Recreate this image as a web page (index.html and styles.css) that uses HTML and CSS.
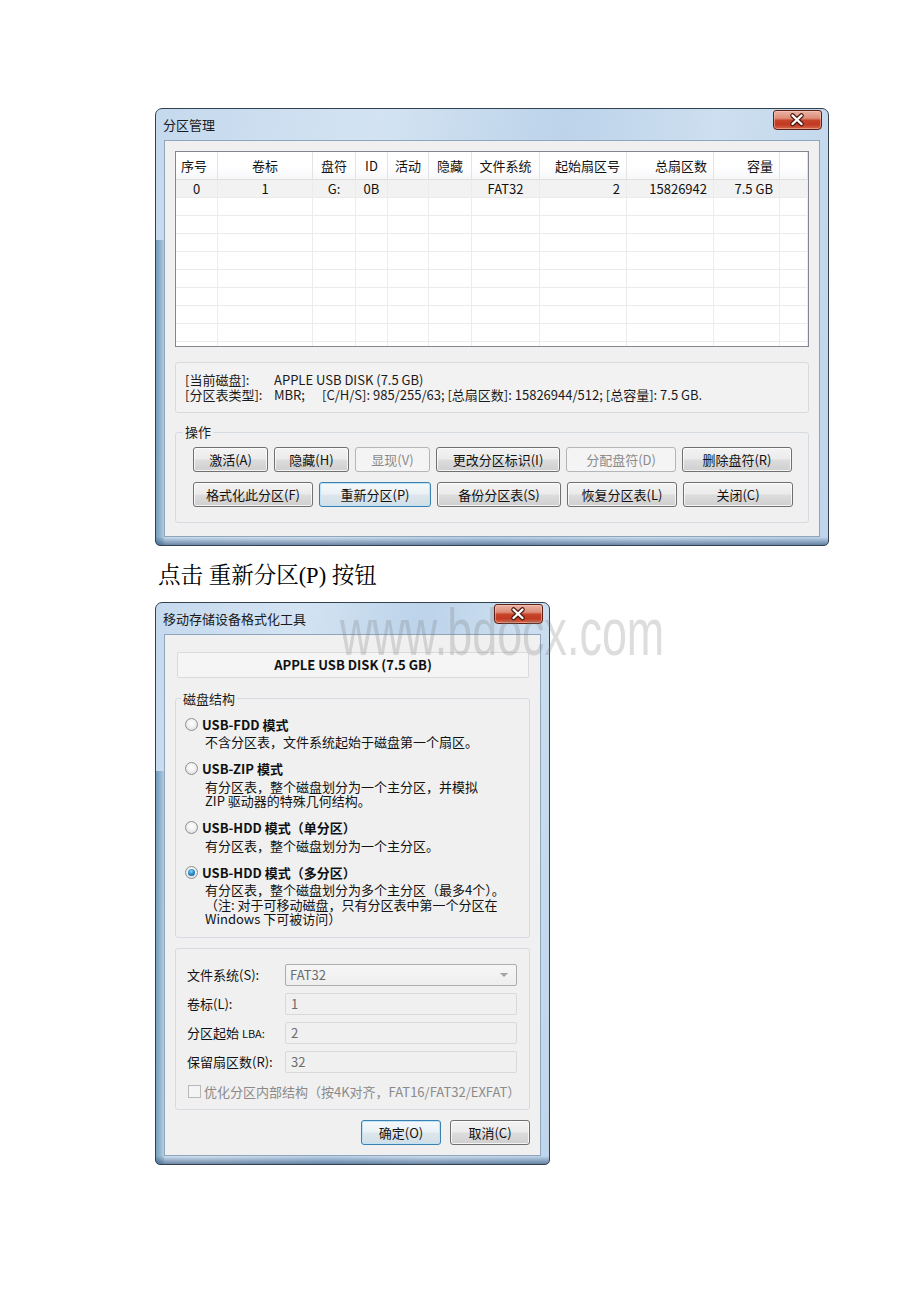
FILE: index.html
```html
<!DOCTYPE html>
<html lang="zh-CN">
<head>
<meta charset="utf-8">
<title>分区管理</title>
<link rel="stylesheet" href="styles.css">
</head>
<body>
<div class="page">

  <div class="win win-part">
    <div class="titlebar">
      <span class="title">分区管理</span>
      <span class="close">
        <svg width="48" height="20" viewBox="0 0 48 20">
          <path d="M19.5 5.5 L28.5 14 M28.5 5.5 L19.5 14" stroke="#4a1810" stroke-width="4.6" stroke-linecap="round"/>
          <path d="M19.5 5.5 L28.5 14 M28.5 5.5 L19.5 14" stroke="#ffffff" stroke-width="2.4" stroke-linecap="round"/>
        </svg>
      </span>
    </div>
    <div class="client client-part">
      <div class="listview">
        <div class="lv-row lv-head">
          <div class="c l">序号</div>
          <div class="c m">卷标</div>
          <div class="c m">盘符</div>
          <div class="c m">ID</div>
          <div class="c m">活动</div>
          <div class="c m">隐藏</div>
          <div class="c m">文件系统</div>
          <div class="c r">起始扇区号</div>
          <div class="c r">总扇区数</div>
          <div class="c r">容量</div>
          <div class="c"></div>
        </div>
        <div class="lv-row lv-sel">
          <div class="c m">0</div>
          <div class="c m">1</div>
          <div class="c m">G:</div>
          <div class="c m">0B</div>
          <div class="c"></div>
          <div class="c"></div>
          <div class="c m">FAT32</div>
          <div class="c r">2</div>
          <div class="c r">15826942</div>
          <div class="c r">7.5 GB</div>
          <div class="c"></div>
        </div>
        <div class="lv-row"><div class="c"></div><div class="c"></div><div class="c"></div><div class="c"></div><div class="c"></div><div class="c"></div><div class="c"></div><div class="c"></div><div class="c"></div><div class="c"></div><div class="c"></div></div>
        <div class="lv-row"><div class="c"></div><div class="c"></div><div class="c"></div><div class="c"></div><div class="c"></div><div class="c"></div><div class="c"></div><div class="c"></div><div class="c"></div><div class="c"></div><div class="c"></div></div>
        <div class="lv-row"><div class="c"></div><div class="c"></div><div class="c"></div><div class="c"></div><div class="c"></div><div class="c"></div><div class="c"></div><div class="c"></div><div class="c"></div><div class="c"></div><div class="c"></div></div>
        <div class="lv-row"><div class="c"></div><div class="c"></div><div class="c"></div><div class="c"></div><div class="c"></div><div class="c"></div><div class="c"></div><div class="c"></div><div class="c"></div><div class="c"></div><div class="c"></div></div>
        <div class="lv-row"><div class="c"></div><div class="c"></div><div class="c"></div><div class="c"></div><div class="c"></div><div class="c"></div><div class="c"></div><div class="c"></div><div class="c"></div><div class="c"></div><div class="c"></div></div>
        <div class="lv-row"><div class="c"></div><div class="c"></div><div class="c"></div><div class="c"></div><div class="c"></div><div class="c"></div><div class="c"></div><div class="c"></div><div class="c"></div><div class="c"></div><div class="c"></div></div>
        <div class="lv-row"><div class="c"></div><div class="c"></div><div class="c"></div><div class="c"></div><div class="c"></div><div class="c"></div><div class="c"></div><div class="c"></div><div class="c"></div><div class="c"></div><div class="c"></div></div>
        <div class="lv-row"><div class="c"></div><div class="c"></div><div class="c"></div><div class="c"></div><div class="c"></div><div class="c"></div><div class="c"></div><div class="c"></div><div class="c"></div><div class="c"></div><div class="c"></div></div>
        <div class="lv-row"><div class="c"></div><div class="c"></div><div class="c"></div><div class="c"></div><div class="c"></div><div class="c"></div><div class="c"></div><div class="c"></div><div class="c"></div><div class="c"></div><div class="c"></div></div>
      </div>

      <div class="info">
        <div class="info-line"><span class="k">[当前磁盘]:</span><span>APPLE USB DISK (7.5 GB)</span></div>
        <div class="info-line"><span class="k">[分区表类型]:</span><span class="mbr">MBR;</span><span>[C/H/S]: 985/255/63; [总扇区数]: 15826944/512; [总容量]: 7.5 GB.</span></div>
      </div>

      <fieldset class="group ops">
        <legend>操作</legend>
        <div class="ops-body">
          <div class="btn-row">
            <button class="btn w75">激活(A)</button>
            <button class="btn w75">隐藏(H)</button>
            <button class="btn w75" disabled>显现(V)</button>
            <button class="btn w124">更改分区标识(I)</button>
            <button class="btn w110" disabled>分配盘符(D)</button>
            <button class="btn w110">删除盘符(R)</button>
          </div>
          <div class="btn-row">
            <button class="btn w120">格式化此分区(F)</button>
            <button class="btn w112 def">重新分区(P)</button>
            <button class="btn w124">备份分区表(S)</button>
            <button class="btn w110">恢复分区表(L)</button>
            <button class="btn w110">关闭(C)</button>
          </div>
        </div>
      </fieldset>
    </div>
  </div>

  <p class="caption">点击 重新分区(P) 按钮</p>

  <div class="win win-fmt">
    <div class="titlebar">
      <span class="title">移动存储设备格式化工具</span>
      <span class="close">
        <svg width="48" height="20" viewBox="0 0 48 20">
          <path d="M19.5 5.5 L28.5 14 M28.5 5.5 L19.5 14" stroke="#4a1810" stroke-width="4.6" stroke-linecap="round"/>
          <path d="M19.5 5.5 L28.5 14 M28.5 5.5 L19.5 14" stroke="#ffffff" stroke-width="2.4" stroke-linecap="round"/>
        </svg>
      </span>
    </div>
    <div class="client client-fmt">
      <div class="disk-name">APPLE USB DISK (7.5 GB)</div>

      <fieldset class="group struct">
        <legend>磁盘结构</legend>
        <div class="struct-body">
          <div class="opt">
            <div class="opt-title"><span class="radio"></span><b>USB-FDD 模式</b></div>
            <div class="opt-desc">不含分区表，文件系统起始于磁盘第一个扇区。</div>
          </div>
          <div class="opt">
            <div class="opt-title"><span class="radio"></span><b>USB-ZIP 模式</b></div>
            <div class="opt-desc"><div>有分区表，整个磁盘划分为一个主分区，并模拟</div><div>ZIP 驱动器的特殊几何结构。</div></div>
          </div>
          <div class="opt">
            <div class="opt-title"><span class="radio"></span><b>USB-HDD 模式（单分区）</b></div>
            <div class="opt-desc">有分区表，整个磁盘划分为一个主分区。</div>
          </div>
          <div class="opt">
            <div class="opt-title"><span class="radio checked"></span><b>USB-HDD 模式（多分区）</b></div>
            <div class="opt-desc"><div>有分区表，整个磁盘划分为多个主分区（最多4个）。</div><div>（注: 对于可移动磁盘，只有分区表中第一个分区在</div><div>Windows 下可被访问）</div></div>
          </div>
        </div>
      </fieldset>

      <fieldset class="group params">
        <div class="params-body">
          <div class="field">
            <span class="lbl">文件系统(S):</span>
            <span class="combo"><span>FAT32</span><span class="arrow"></span></span>
          </div>
          <div class="field">
            <span class="lbl">卷标(L):</span>
            <span class="input">1</span>
          </div>
          <div class="field">
            <span class="lbl">分区起始 <small>LBA:</small></span>
            <span class="input">2</span>
          </div>
          <div class="field">
            <span class="lbl">保留扇区数(R):</span>
            <span class="input">32</span>
          </div>
          <div class="check-row">
            <span class="checkbox"></span>
            <span class="check-text">优化分区内部结构（按4K对齐，FAT16/FAT32/EXFAT）</span>
          </div>
        </div>
      </fieldset>

      <div class="dlg-buttons">
        <button class="btn w80 def">确定(O)</button>
        <button class="btn w80">取消(C)</button>
      </div>
    </div>
  </div>

  <div class="watermark">www.bdocx.com</div>
</div>
</body>
</html>
```

FILE: styles.css
```css
* { box-sizing: border-box; }

html, body {
  margin: 0;
  padding: 0;
  background: #ffffff;
}

body {
  font-family: "Noto Sans CJK SC", "Liberation Sans", sans-serif;
  font-size: 13px;
  color: #000;
}

.page {
  position: relative;
  padding: 108px 0 0 155px;
  height: 1302px;
  overflow: hidden;
}

/* ---------- window frame ---------- */
.win {
  border: 1px solid #34414f;
  border-radius: 7px 7px 5px 5px;
  padding: 0 8px 8px 8px;
  background:
    linear-gradient(0deg, rgba(28, 62, 104, 0.55) 0px, rgba(28, 62, 104, 0.0) 8px),
    linear-gradient(90deg, rgba(30, 96, 138, 0.5) 0px, rgba(30, 96, 138, 0.2) 7px, rgba(30, 96, 138, 0) 9px) 0 100% / 100% 70% no-repeat,
    linear-gradient(100deg, #c5d9ee 0%, #d3e3f2 30%, #bcd3ea 55%, #cddff0 75%, #bfd5eb 100%);
}

.win-part { width: 674px; }

.win-fmt {
  width: 395px;
  margin-top: 13px;
}

.titlebar {
  height: 31px;
  display: flex;
  justify-content: space-between;
  align-items: flex-start;
}

.title {
  margin-left: -1px;
  padding-top: 8px;
  line-height: 16px;
  font-size: 13px;
  color: #1a1a1a;
}

.close {
  display: block;
  width: 49px;
  height: 20px;
  margin-top: 1px;
  margin-right: -2px;
  border: 1px solid #5a1f15;
  border-radius: 3px 3px 4px 4px;
  background: linear-gradient(180deg, #eab2a4 0%, #de8d78 40%, #c7442a 52%, #c23a22 75%, #d6674c 100%);
  box-shadow: inset 0 0 0 1px rgba(255, 215, 200, 0.45);
  overflow: hidden;
}

.close svg {
  display: block;
  margin: -1px 0 0 -1px;
}

.client {
  background: #f0f0f0;
  border: 1px solid #8ea5bc;
}

.client-part { padding: 10px 10px 13px 10px; }

.client-fmt { padding: 17px 10px 10px 10px; }

/* ---------- list view ---------- */
.listview {
  height: 196px;
  border: 1px solid #828790;
  background: #ffffff;
  overflow: hidden;
}

.lv-row {
  display: grid;
  grid-template-columns: 42px 95px 43px 32px 41px 43px 68px 87px 87px 66px 1fr;
  height: 18px;
  border-bottom: 1px solid #ebebeb;
}

.lv-head {
  height: 28px;
  border-bottom: 1px solid #dedede;
  background: linear-gradient(180deg, #ffffff 0%, #ffffff 55%, #f6f7f9 100%);
}

.lv-sel { background: #f2f2f2; }

.c {
  border-right: 1px solid #ececec;
  padding: 0 5px;
  white-space: nowrap;
  overflow: hidden;
  line-height: 17px;
  color: #111;
}

.lv-head .c {
  line-height: 27px;
  border-right-color: #e4e4e4;
}

.c.m { text-align: center; padding: 0 2px; }
.c.r { text-align: right; padding: 0 6px 0 2px; }
.c.l { text-align: left; }

/* ---------- info ---------- */
.info {
  margin-top: 15px;
  height: 51px;
  border: 1px solid #dadada;
  border-radius: 3px;
  background: #f2f2f2;
  padding: 9px 8px 0 9px;
}

.info-line {
  line-height: 15px;
  white-space: nowrap;
  color: #1a1a1a;
}

.info-line .k {
  display: inline-block;
  width: 89px;
}

.info-line .mbr {
  display: inline-block;
  width: 48px;
}

/* ---------- group boxes ---------- */
.group {
  margin: 0;
  padding: 0;
  min-width: 0;
  border: 1px solid #d5dbe0;
  border-radius: 3px;
}

.group legend {
  margin-left: 7px;
  padding: 0 2px;
  line-height: 14px;
  font-size: 13px;
  color: #1a1a1a;
}

.ops { margin-top: 12px; }

.ops-body {
  padding: 8px 0 15px 17px;
  display: flex;
  flex-direction: column;
  gap: 10px;
}

.btn-row {
  display: flex;
  gap: 6px;
}

/* ---------- buttons ---------- */
.btn {
  height: 25px;
  padding: 0;
  margin: 0;
  font-family: inherit;
  font-size: 13px;
  line-height: 23px;
  color: #111;
  text-align: center;
  border: 1px solid #707070;
  border-radius: 3px;
  background: linear-gradient(180deg, #f3f3f3 0%, #ebebeb 48%, #dddddd 52%, #cfcfcf 100%);
  box-shadow: inset 0 0 0 1px rgba(255, 255, 255, 0.75);
}

.btn[disabled] {
  color: #8b8b8b;
  border-color: #b3b6b8;
  background: #f4f4f4;
  box-shadow: none;
}

.btn.def {
  border-color: #3c7fb1;
  background: linear-gradient(180deg, #f4f8fa 0%, #eaf1f5 48%, #dce6ec 52%, #d2dee6 100%);
  box-shadow: inset 0 0 0 1px #bfe4f7;
}

.w75 { width: 75px; }
.w80 { width: 80px; }
.w110 { width: 110px; }
.w112 { width: 112px; }
.w120 { width: 120px; }
.w124 { width: 124px; }

/* ---------- caption ---------- */
.caption {
  margin: 17px 0 0 3px;
  font-family: "Liberation Serif", "Noto Serif CJK SC", "Noto Sans CJK SC", serif;
  font-size: 22.5px;
  line-height: 26px;
  color: #000;
}

/* ---------- format dialog ---------- */
.disk-name {
  height: 26px;
  margin: 0 1px 0 2px;
  border: 1px solid #dadada;
  border-radius: 2px;
  background: #f5f5f5;
  text-align: center;
  font-weight: bold;
  line-height: 23px;
  color: #111;
}

.struct { margin-top: 13px; }

.struct legend { margin-left: 5px; line-height: 15px; }

.struct-body {
  padding: 9px 0 10px 0;
  display: flex;
  flex-direction: column;
  gap: 10px;
}

.opt-title {
  display: flex;
  align-items: center;
  height: 18px;
  white-space: nowrap;
}

.opt-title b { color: #111; }

.radio {
  flex: none;
  position: relative;
  width: 13px;
  height: 13px;
  margin: 0 4px 0 9px;
  border: 1px solid #8e8f8f;
  border-radius: 50%;
  background: radial-gradient(circle at 50% 40%, #ffffff 0%, #f1f1f1 45%, #d3d3d3 100%);
}

.radio.checked::after {
  content: "";
  position: absolute;
  left: 2px;
  top: 2px;
  width: 7px;
  height: 7px;
  border-radius: 50%;
  background: radial-gradient(circle at 45% 35%, #8fd8f7 0%, #2b8ccc 45%, #10507f 100%);
}

.opt-desc {
  margin: 2px 0 0 29px;
  line-height: 14.5px;
  color: #111;
  white-space: nowrap;
}

.params { margin-top: 10px; }

.params-body {
  padding: 15px 12px 9px 11px;
  display: flex;
  flex-direction: column;
  gap: 7px;
}

.field {
  display: flex;
  align-items: center;
  height: 22px;
}

.lbl {
  width: 98px;
  flex: none;
  color: #111;
  white-space: nowrap;
}

.lbl small { font-size: 11px; }

.combo,
.input {
  width: 233px;
  height: 22px;
  padding: 0 0 0 4px;
  line-height: 20px;
  color: #6d6d6d;
  white-space: nowrap;
}

.combo {
  display: flex;
  align-items: center;
  justify-content: space-between;
  border: 1px solid #acacac;
  border-radius: 2px;
  background: linear-gradient(180deg, #f6f6f6 0%, #eeeeee 100%);
}

.arrow {
  width: 0;
  height: 0;
  margin-right: 8px;
  border-left: 4px solid transparent;
  border-right: 4px solid transparent;
  border-top: 4px solid #a4a4a4;
}

.input {
  display: block;
  border: 1px solid #d9d9d9;
  border-radius: 2px;
  background: #f0f0f0;
  padding-left: 5px;
}

.check-row {
  display: flex;
  align-items: center;
  height: 16px;
  margin-top: 4px;
}

.checkbox {
  flex: none;
  width: 13px;
  height: 13px;
  margin: 0 3px 0 1px;
  border: 1px solid #b8b8b8;
  background: #f4f4f4;
}

.check-text {
  color: #8a8a8a;
  white-space: nowrap;
}

.dlg-buttons {
  margin-top: 10px;
  display: flex;
  justify-content: flex-end;
  gap: 9px;
}

/* ---------- watermark overlay ---------- */
.watermark {
  position: absolute;
  left: 340px;
  top: 607px;
  font-family: "Liberation Sans", sans-serif;
  font-size: 66px;
  line-height: 50px;
  white-space: nowrap;
  color: rgba(120, 120, 120, 0.25);
  transform: scaleX(0.68);
  transform-origin: left top;
  pointer-events: none;
}
```
